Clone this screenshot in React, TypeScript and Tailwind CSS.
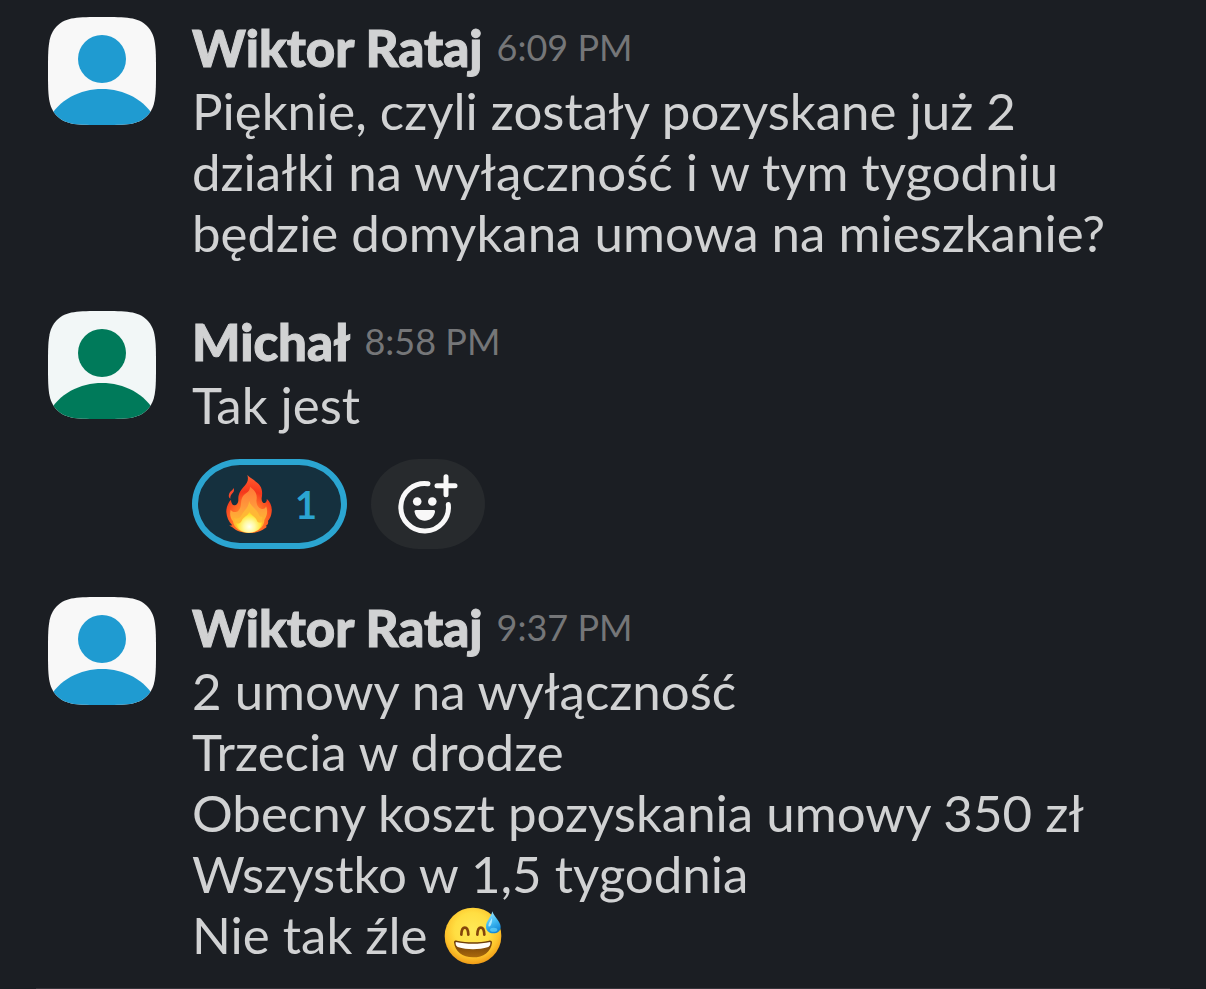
import React from 'react';

type AvatarProps = {
  name: string;
  color: string;
  background: string;
};

function Avatar({ name, color, background }: AvatarProps) {
  const clipId = `avatar-${React.useId()}`;

  return (
    <svg viewBox="0 0 108 108" className="size-[108px] shrink-0" role="img" aria-label={name}>
      <clipPath id={clipId}>
        <path d="M54 0C78 0 90 0 99 9C108 18 108 30 108 54C108 78 108 90 99 99C90 108 78 108 54 108C30 108 18 108 9 99C0 90 0 78 0 54C0 30 0 18 9 9C18 0 30 0 54 0Z" />
      </clipPath>
      <g clipPath={`url(#${clipId})`}>
        <rect width="108" height="108" fill={background} />
        <circle cx="54" cy="42" r="24" fill={color} />
        <path d="M-2 108C7 84 31 72 54 72S101 84 110 108Z" fill={color} />
      </g>
    </svg>
  );
}

function FireEmoji() {
  return (
    <svg viewBox="44 27 144 180" className="h-[60px] w-12 shrink-0" role="img" aria-label="fire">
      <defs>
        <radialGradient id="fire-outer" cx="116" cy="160" r="125" gradientUnits="userSpaceOnUse">
          <stop offset="0" stopColor="#ffb020" />
          <stop offset="0.4" stopColor="#ff6a26" />
          <stop offset="0.65" stopColor="#f5371c" />
          <stop offset="1" stopColor="#ff5b2e" />
        </radialGradient>
        <linearGradient id="fire-middle" x1="116" y1="60" x2="116" y2="200" gradientUnits="userSpaceOnUse">
          <stop offset="0" stopColor="#ff7336" />
          <stop offset="0.5" stopColor="#ff9c3c" />
          <stop offset="1" stopColor="#ffc928" />
        </linearGradient>
        <radialGradient id="fire-core" cx="117" cy="185" r="48" gradientUnits="userSpaceOnUse">
          <stop offset="0" stopColor="#fffff0" />
          <stop offset="0.35" stopColor="#fff9a0" />
          <stop offset="0.75" stopColor="#ffe32e" />
          <stop offset="1" stopColor="#ffbd2a" />
        </radialGradient>
      </defs>
      <path
        d="M111 30C124 43 139 48 149 62C157 74 156 88 154 99C153 110 158 115 164 114C169 111 170 106 169 101C180 111 186 125 184 141C183 152 179 161 173 168C175 174 172 180 166 183C171 184 169 187 164 190C153 199 139 204 116 204C94 204 78 198 66 187C62 185 59 184 57 181C61 182 64 182 65 180C55 170 49 157 48 142C47 128 53 113 62 104C62 112 65 119 71 121C79 121 84 114 84 104C83 86 91 75 103 62C112 52 115 43 111 30Z"
        fill="url(#fire-outer)"
      />
      <path d="M70 69C73 76 70 82 65 86C60 91 60 95 60 101C55 98 54 92 57 85C60 78 67 76 70 69Z" fill="#f5482b" />
      <path
        d="M119 65C130 73 141 84 139 101C136 119 144 129 154 132C162 133 166 129 167 124C174 140 169 155 162 165C162 187 141 202 116 202C91 202 71 190 68 169C59 159 58 146 61 134C66 142 76 144 84 137C96 126 89 111 96 97C101 84 119 84 119 65Z"
        fill="url(#fire-middle)"
      />
      <path
        d="M116 107C119 122 139 132 145 147C147 153 151 157 157 155C154 168 157 181 149 190C141 199 130 203 116 203C102 203 88 199 80 188C73 179 74 166 72 158C80 164 90 159 94 150C100 136 116 128 116 107Z"
        fill="#ffbd35"
        opacity="0.75"
      />
      <path
        d="M117 141C122 151 136 155 140 167C142 173 149 174 155 172C153 193 137 203 116 203C95 203 81 194 77 174C84 178 91 174 94 167C99 155 113 153 117 141Z"
        fill="url(#fire-core)"
      />
    </svg>
  );
}

function SweatSmileEmoji() {
  return (
    <svg
      viewBox="27 22 174 174"
      className="ml-1 inline-block size-[58px] align-[-11px]"
      role="img"
      aria-label="grinning face with sweat"
    >
      <defs>
        <radialGradient id="face-fill" cx="112" cy="92" r="106" gradientUnits="userSpaceOnUse">
          <stop offset="0" stopColor="#ffe957" />
          <stop offset="0.5" stopColor="#ffde42" />
          <stop offset="0.75" stopColor="#fdc42c" />
          <stop offset="1" stopColor="#ee9413" />
        </radialGradient>
        <linearGradient id="face-mouth" x1="0" y1="126" x2="0" y2="172" gradientUnits="userSpaceOnUse">
          <stop offset="0" stopColor="#6b3a08" />
          <stop offset="1" stopColor="#a9690c" />
        </linearGradient>
        <linearGradient id="face-drop" x1="160" y1="40" x2="190" y2="98" gradientUnits="userSpaceOnUse">
          <stop offset="0" stopColor="#9be3fb" />
          <stop offset="0.45" stopColor="#43bdf3" />
          <stop offset="1" stopColor="#0c80d4" />
        </linearGradient>
      </defs>
      <circle cx="114" cy="109" r="85" fill="url(#face-fill)" />
      <path d="M79 105C80 77 99 77 100 105M127 105C128 77 147 77 148 105" fill="none" stroke="#84460b" strokeWidth="8" strokeLinecap="round" />
      <path d="M57 128C57 123 61 122 66 123C97 129 131 129 162 123C168 122 171 124 171 129C168 156 146 173 114 173C82 173 60 156 57 128Z" fill="url(#face-mouth)" />
      <path d="M62 127C96 134 132 134 166 127C167 134 165 139 160 142C130 151 98 151 68 142C63 139 61 134 62 127Z" fill="#fffdf8" />
      <path d="M172 35C175 49 197 65 197 82C197 94 187 101 175 101C162 101 153 93 153 81C153 64 169 52 172 35Z" fill="url(#face-drop)" />
      <path d="M171 55C166 64 160 71 160 79C163 83 167 79 169 73C171 67 172 61 171 55Z" fill="#c9f2ff" opacity="0.8" />
      <ellipse cx="176" cy="90" rx="11" ry="6" fill="#65d3fa" opacity="0.7" />
    </svg>
  );
}

function AddReactionIcon() {
  return (
    <svg viewBox="13 9 60 60" className="size-[60px]" fill="none" stroke="#f8f8f8" strokeWidth="5" strokeLinecap="round" aria-hidden="true">
      <path d="M43 18.7A23.8 23.8 0 1 0 63.3 39.6" />
      <path d="M61 11.7V29.7M52 20.7H70" />
      <g fill="#f8f8f8" stroke="none">
        <circle cx="32.2" cy="36.5" r="4.3" />
        <circle cx="47.3" cy="36.5" r="4.3" />
        <path d="M31 45H48.6C49.8 45 50.3 45.8 50 47C48.8 52.5 44.8 55.7 39.8 55.7S30.8 52.5 29.6 47C29.3 45.8 29.8 45 31 45Z" />
      </g>
    </svg>
  );
}

type MessageProps = {
  author: string;
  time: string;
  color: string;
  background: string;
  children: React.ReactNode;
};

function Message({ author, time, color, background, children }: MessageProps) {
  return (
    <article className="flex gap-9">
      <Avatar name={author} color={color} background={background} />
      <div className="min-w-0 flex-1">
        <header className="flex items-center gap-3.5 pb-0.5">
          <h2 className="font-black [-webkit-text-stroke:1px_#d1d2d3]">{author}</h2>
          <time className="text-[36px] leading-[61px] text-[#757678]">{time}</time>
        </header>
        {children}
      </div>
    </article>
  );
}

export default function App() {
  return (
    <main className="bg-[#1b1e23] pt-[17px] font-['Lato',sans-serif] text-[51px] leading-[61px] text-[#d1d2d3]">
      <div className="flex flex-col gap-12 px-12 pb-[23px]">
        <Message author="Wiktor Rataj" time="6:09 PM" color="#1f9bd1" background="#f8f8f8">
          <p>Pięknie, czyli zostały pozyskane już 2 działki na wyłączność i w tym tygodniu będzie domykana umowa na mieszkanie?</p>
        </Message>

        <Message author="Michał" time="8:58 PM" color="#007a5a" background="#f2f7f7">
          <p>Tak jest</p>
          <div className="mt-6 flex gap-6">
            <button
              type="button"
              aria-pressed="true"
              className="flex h-[90px] items-center gap-[22px] rounded-[48px/45px] border-6 border-[#2ba5d1] bg-[#15303e] pr-6 pl-[27px] text-[38px] font-bold text-[#2ba5d1]"
            >
              <FireEmoji />
              <span>1</span>
            </button>
            <button
              type="button"
              aria-label="Add reaction"
              className="flex h-[90px] w-[114px] items-center justify-center rounded-[48px/45px] bg-[#272a2d]"
            >
              <AddReactionIcon />
            </button>
          </div>
        </Message>

        <Message author="Wiktor Rataj" time="9:37 PM" color="#1f9bd1" background="#f8f8f8">
          <p>2 umowy na wyłączność</p>
          <p>Trzecia w drodze</p>
          <p>Obecny koszt pozyskania umowy 350 zł</p>
          <p>Wszystko w 1,5 tygodnia</p>
          <p>
            Nie tak źle <SweatSmileEmoji />
          </p>
        </Message>
      </div>
      <div className="mx-9 border-t border-[#35343a]" />
    </main>
  );
}
